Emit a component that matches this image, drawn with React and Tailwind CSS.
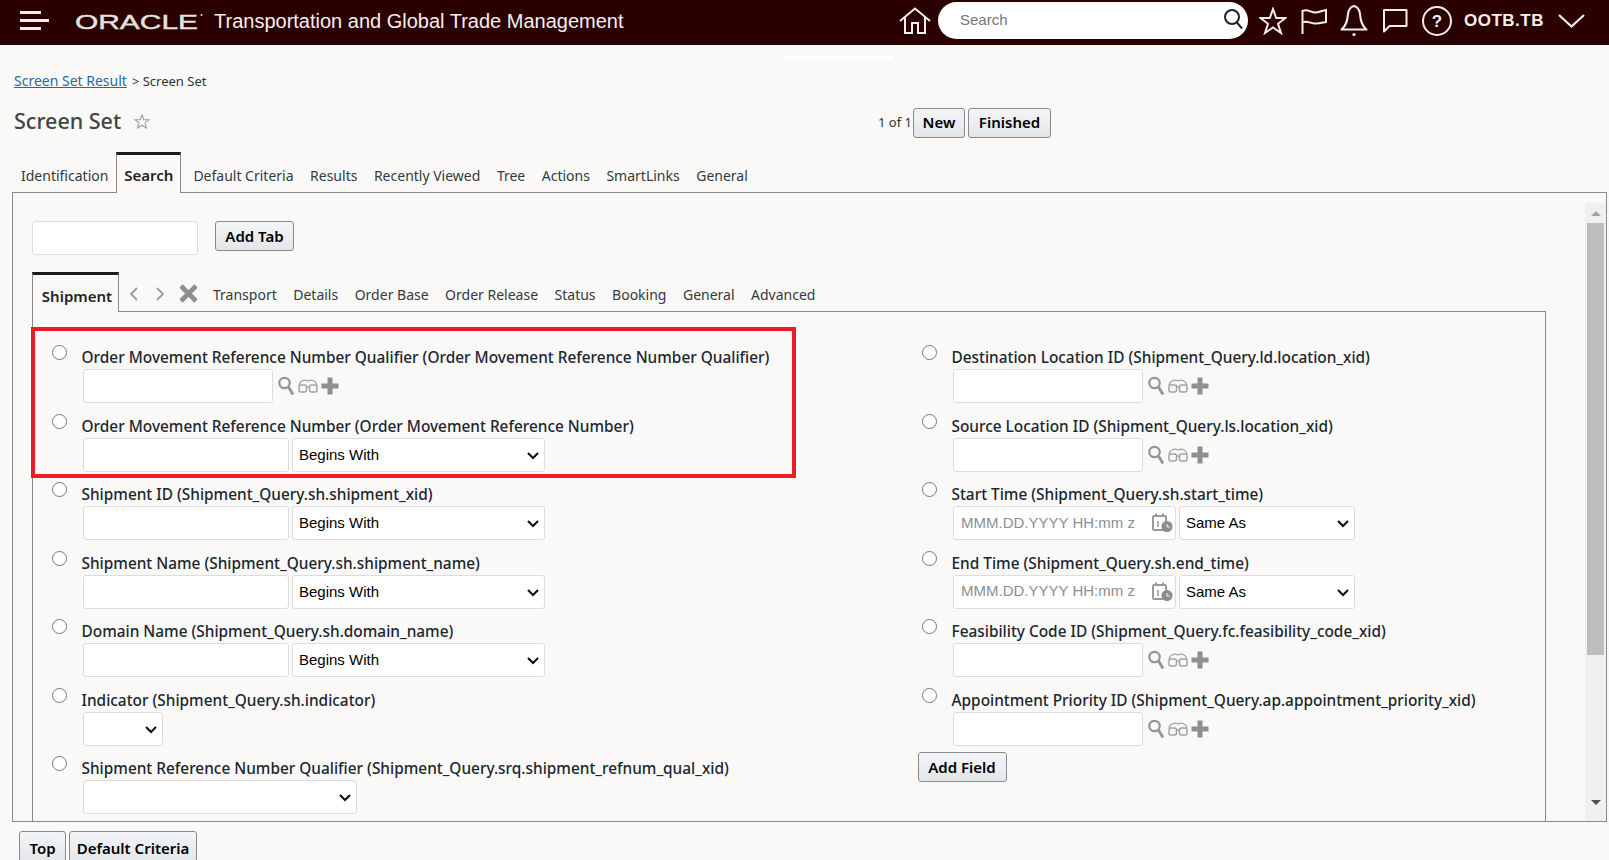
import React from "react";

const sans = "font-['Noto_Sans',sans-serif]";
const arial = "font-['Liberation_Sans',Arial,sans-serif]";

const MagnifierIcon = () => (
  <svg width="17" height="20" viewBox="0 0 17 20" fill="none" className="shrink-0">
    <circle cx="6.5" cy="7" r="5.2" stroke="#949494" strokeWidth="2.2" />
    <path d="M10.5 11 L15 18.5" stroke="#949494" strokeWidth="2.8" />
  </svg>
);

const GlassesIcon = () => (
  <svg width="20" height="16" viewBox="0 0 20 16" fill="none" className="shrink-0">
    <path d="M1 7 C2 3 6 1 10 3 C14 1 18 3 19 7" stroke="#a3a3a3" strokeWidth="1.3" />
    <rect x="1" y="7" width="7.5" height="7" rx="2" stroke="#a3a3a3" strokeWidth="1.5" />
    <rect x="11.5" y="7" width="7.5" height="7" rx="2" stroke="#a3a3a3" strokeWidth="1.5" />
    <path d="M8.5 9 H11.5" stroke="#a3a3a3" strokeWidth="1.3" />
  </svg>
);

const PlusIcon = () => (
  <svg width="18" height="18" viewBox="0 0 18 18" className="shrink-0">
    <path d="M6.5 0.5 H11.5 V6.5 H17.5 V11.5 H11.5 V17.5 H6.5 V11.5 H0.5 V6.5 H6.5 Z" fill="#8f8f8f" />
  </svg>
);

const CalendarClockIcon = () => (
  <svg width="21" height="20" viewBox="0 0 21 20" className="shrink-0">
    <rect x="1" y="3" width="13" height="14" rx="1" fill="none" stroke="#9a9a9a" strokeWidth="2" />
    <path d="M4 0.5 V4 M11 0.5 V4" stroke="#9a9a9a" strokeWidth="2" />
    <path d="M6 8 V14" stroke="#9a9a9a" strokeWidth="1.6" />
    <circle cx="15" cy="13.5" r="5.5" fill="#8c8c8c" />
    <path d="M15 11 V14 H18" fill="none" stroke="#f2f2f2" strokeWidth="1" />
  </svg>
);

const HeaderIcons = () => (
  <div className="flex items-center">
    {/* star */}
    <svg width="28" height="28" viewBox="0 0 28 28" fill="none" className="ml-[11px]" stroke="#f5efec" strokeWidth="2">
      <path d="M14 2 L17.2 11 L26.5 11 L19 16.8 L22 26 L14 20.4 L6 26 L9 16.8 L1.5 11 L10.8 11 Z" strokeLinejoin="miter" />
    </svg>
    {/* flag */}
    <svg width="28" height="28" viewBox="0 0 28 28" fill="none" className="ml-[13px]" stroke="#f5efec" strokeWidth="2">
      <path d="M2.5 27 V4 C8 1.5 11 6 16 5.5 C20 5 23 3.5 26 3 V15 C21 16 18 17 14 16.5 C10 16 7 13.5 2.5 15.5" />
    </svg>
    {/* bell */}
    <svg width="28" height="32" viewBox="0 0 28 32" fill="none" className="ml-[12px]" stroke="#f5efec" strokeWidth="2">
      <path d="M14 1 C10 2 8.5 5 8 9 C7.5 14 7 20 1.5 24.5 H26.5 C21 20 20.5 14 20 9 C19.5 5 18 2 14 1 Z" strokeLinejoin="round" />
      <circle cx="14" cy="29.5" r="1.6" fill="#f5efec" stroke="none" />
    </svg>
    {/* chat */}
    <svg width="26" height="25" viewBox="0 0 26 25" fill="none" className="ml-[14px]" stroke="#f5efec" strokeWidth="2">
      <path d="M2 2 H24.5 V18 H7.5 L2 23.5 Z" strokeLinejoin="round" />
    </svg>
    {/* help */}
    <svg width="30" height="30" viewBox="0 0 30 30" fill="none" className="ml-[14px]">
      <circle cx="15" cy="15" r="14" stroke="#f5efec" strokeWidth="2" />
      <text x="15" y="21" textAnchor="middle" fontSize="17" fontWeight="700" fill="#f5efec" fontFamily="Liberation Sans">?</text>
    </svg>
  </div>
);

const Row = ({ label, children }) => (
  <div className="flex h-[68.5px] items-start">
    <input type="radio" name="field" className="mt-[1px] h-[15px] w-[15px] shrink-0" />
    <div className="ml-[15px] min-w-0">
      <div className={`mt-[4px] text-[15.4px] leading-[20px] font-medium whitespace-nowrap text-[#20262e] ${sans}`}>{label}</div>
      <div className="mt-[1px] ml-[1.5px] flex items-center">{children}</div>
    </div>
  </div>
);

const TextInput = ({ w, ...rest }) => (
  <input type="text" className={`${w} h-[34px] rounded-[3px] border border-[#dcdcdc] bg-white px-[6px] ${arial} text-[15px]`} {...rest} />
);

const Select = ({ w, value }) => (
  <div className={`relative ${w}`}>
    <select defaultValue={value} className={`h-[34px] w-full appearance-none rounded-[3px] border border-[#dcdcdc] bg-white pl-[6px] pt-[1px] ${arial} text-[15px] text-black`}>
      <option>{value}</option>
    </select>
    <svg width="12" height="8" viewBox="0 0 12 8" fill="none" stroke="#111" strokeWidth="2.2" className="absolute right-[6px] top-[14px]">
      <path d="M1 1 L6 6 L11 1" />
    </svg>
  </div>
);

const Lookup = () => (
  <div className="flex items-center">
    <TextInput w="w-[190px]" />
    <div className="ml-[5px] flex items-center">
      <MagnifierIcon />
      <span className="ml-[3px]"><GlassesIcon /></span>
      <span className="ml-[3px]"><PlusIcon /></span>
    </div>
  </div>
);

const Operator = () => (
  <>
    <TextInput w="w-[206px]" />
    <span className="ml-[3px]"><Select w="w-[253px]" value="Begins With" /></span>
  </>
);

const DateField = () => (
  <>
    <div className="flex h-[34px] w-[223px] items-center justify-between rounded-[3px] border border-[#dcdcdc] bg-white pl-[7px] pr-[2px]">
      <span className={`${arial} text-[15px] text-[#8a9097]`}>MMM.DD.YYYY HH:mm z</span>
      <CalendarClockIcon />
    </div>
    <span className="ml-[3px]"><Select w="w-[176px]" value="Same As" /></span>
  </>
);

const Btn = ({ children, className = "" }) => (
  <button className={`rounded-[3px] border border-[#8a8a8a] bg-gradient-to-b from-[#f3f5f7] to-[#e3e6e9] text-[15px] font-semibold text-black ${sans} ${className}`}>
    {children}
  </button>
);

const Tab = ({ children }) => (
  <span className={`block text-[14px] leading-[20px] whitespace-nowrap text-[#333a40] ${sans}`}>{children}</span>
);

export default function App() {
  return (
    <div className={`relative flex h-[860px] w-[1609px] flex-col overflow-hidden bg-[#faf9f7] ${sans}`}>
      {/* top bar */}
      <header className="flex h-[45px] shrink-0 items-center bg-[#2b0000] pb-[4px] text-[#f5efec]">
        <div className="ml-[20px] flex w-[29px] flex-col gap-[5.5px]">
          <div className="h-[2.5px] w-[21px] bg-[#f5efec]" />
          <div className="h-[2.5px] w-[29px] bg-[#f5efec]" />
          <div className="h-[2.5px] w-[21px] bg-[#f5efec]" />
        </div>
        <svg width="130" height="20" viewBox="0 0 130 20" className="ml-[26px] shrink-0">
          <text x="0" y="17.5" textLength="123" lengthAdjust="spacingAndGlyphs" fontSize="21" stroke="#e7e2df" strokeWidth="0.4" fill="#e7e2df" fontFamily="Liberation Sans">ORACLE</text>
          <circle cx="126.5" cy="4" r="1" fill="#e7e2df" />
        </svg>
        <span className={`ml-[9px] text-[20px] whitespace-nowrap ${arial}`}>Transportation and Global Trade Management</span>
        <div className="ml-auto flex items-center">
          <svg width="32" height="28" viewBox="0 0 32 28" fill="none" stroke="#f5efec" strokeWidth="2">
            <path d="M1 14 L16 1.5 L31 14 M6 10.5 V26 H13 V16 H19 V26 H26 V10.5" />
          </svg>
          <div className="relative ml-[7px] flex h-[37px] w-[310px] items-center rounded-full bg-white pl-[22px]">
            <span className={`text-[15px] text-[#777] ${arial}`}>Search</span>
            <svg width="21" height="22" viewBox="0 0 21 22" fill="none" stroke="#222" strokeWidth="2" className="absolute right-[4px] top-[6px]">
              <circle cx="9" cy="9" r="7" />
              <path d="M13.5 14 L19 20.5" />
            </svg>
          </div>
          <HeaderIcons />
          <span className={`ml-[12px] text-[17px] font-bold tracking-[0.5px] ${arial}`}>OOTB.TB</span>
          <svg width="27" height="14" viewBox="0 0 27 14" fill="none" stroke="#f5efec" strokeWidth="2.2" className="ml-[14px] mr-[24px]">
            <path d="M1 1 L13.5 12.5 L26 1" />
          </svg>
        </div>
      </header>

      {/* stray strip under the bar */}
      <div className="absolute left-[783px] top-[56px] h-[5px] w-[110px] bg-white" />

      <div className="mt-[26px] ml-[14px] flex items-baseline text-[14px] leading-[20px]">
        <a className="text-[#1b6ca8] underline">Screen Set Result</a>
        <span className="ml-[5px] text-[13px] text-[#333]">&gt; Screen Set</span>
      </div>

      <div className="relative mt-[14px] flex h-[32px] items-center">
        <h1 className="ml-[14px] mt-[1px] text-[21.5px] font-medium text-[#444]">Screen Set</h1>
        <svg width="16" height="15" viewBox="0 0 17 16" fill="none" stroke="#a0a0a0" strokeWidth="1.2" className="ml-[13px]">
          <path d="M8.5 1 L10.5 6 L16 6.2 L11.7 9.5 L13.2 15 L8.5 12 L3.8 15 L5.3 9.5 L1 6.2 L6.5 6 Z" />
        </svg>
        <div className="absolute left-[878px] top-[2px] flex h-[31px] items-center">
          <span className={`w-[35px] text-[13px] whitespace-nowrap text-[#333] ${sans}`}>1 of 1</span>
          <Btn className="h-[30px] w-[52px]">New</Btn>
          <Btn className="ml-[3px] h-[30px] w-[83px]">Finished</Btn>
        </div>
      </div>

      {/* primary tabs */}
      <div className="mt-[15px] flex h-[41px] items-end pl-[21px]">
        <div className="pb-[6px]"><Tab>Identification</Tab></div>
        <div className="relative z-10 mb-[-1px] ml-[8px] flex h-[41px] w-[65px] items-center justify-center border-x border-t-[3px] border-x-[#8a8a8a] border-t-[#1c1c1c] bg-[#faf9f7] pt-[3px] text-[15px] font-semibold text-[#222]">Search</div>
        <div className="flex gap-[16.5px] pl-[12px] pb-[6px]">
          <Tab>Default Criteria</Tab>
          <Tab>Results</Tab>
          <Tab>Recently Viewed</Tab>
          <Tab>Tree</Tab>
          <Tab>Actions</Tab>
          <Tab>SmartLinks</Tab>
          <Tab>General</Tab>
        </div>
      </div>

      {/* outer panel */}
      <div className="ml-[12px] flex h-[630px] w-[1595px] shrink-0 overflow-hidden border border-[#8a8a8a]">
        <div className="min-w-0 flex-1 pl-[19px]">
          <div className="mt-[28px] flex items-start">
            <input type="text" className="h-[34px] w-[166px] rounded-[3px] border border-[#dcdcdc] bg-white" />
            <Btn className="ml-[17px] h-[30px] w-[79px]">Add Tab</Btn>
          </div>

          {/* field tabs */}
          <div className="mt-[17px] flex h-[39px] items-end">
            <div className="relative z-10 mb-[-1px] flex h-[40px] w-[87px] items-center justify-center border-x border-t-[3px] border-x-[#8a8a8a] border-t-[#1c1c1c] bg-[#faf9f7] pt-[6px] pl-[3px] text-[15px] font-semibold text-[#222]">Shipment</div>
            <div className="flex items-center pl-[10px] pb-[8px]">
              <svg width="10" height="14" viewBox="0 0 10 14" fill="none" stroke="#9c9c9c" strokeWidth="1.8"><path d="M8 1 L2 7 L8 13" /></svg>
              <svg width="10" height="14" viewBox="0 0 10 14" fill="none" stroke="#9c9c9c" strokeWidth="1.8" className="ml-[16px]"><path d="M2 1 L8 7 L2 13" /></svg>
              <svg width="19" height="19" viewBox="0 0 19 19" fill="none" stroke="#8e8e8e" strokeWidth="4.6" className="ml-[14px]"><path d="M2 2 L17 17 M17 2 L2 17" /></svg>
            </div>
            <div className="flex gap-[16.5px] pl-[15px] pb-[6px]">
              <Tab>Transport</Tab>
              <Tab>Details</Tab>
              <Tab>Order Base</Tab>
              <Tab>Order Release</Tab>
              <Tab>Status</Tab>
              <Tab>Booking</Tab>
              <Tab>General</Tab>
              <Tab>Advanced</Tab>
            </div>
          </div>

          {/* fields */}
          <div className="grid h-[600px] w-[1514px] grid-cols-[870px_1fr] border-x border-t border-[#8a8a8a] pt-[32px]">
            <div className="pl-[18.5px]">
              <Row label="Order Movement Reference Number Qualifier (Order Movement Reference Number Qualifier)"><Lookup /></Row>
              <Row label="Order Movement Reference Number (Order Movement Reference Number)"><Operator /></Row>
              <Row label="Shipment ID (Shipment_Query.sh.shipment_xid)"><Operator /></Row>
              <Row label="Shipment Name (Shipment_Query.sh.shipment_name)"><Operator /></Row>
              <Row label="Domain Name (Shipment_Query.sh.domain_name)"><Operator /></Row>
              <Row label="Indicator (Shipment_Query.sh.indicator)"><Select w="w-[80px]" value="" /></Row>
              <Row label="Shipment Reference Number Qualifier (Shipment_Query.srq.shipment_refnum_qual_xid)"><Select w="w-[274px]" value="" /></Row>
            </div>
            <div className="pl-[18.5px]">
              <Row label="Destination Location ID (Shipment_Query.ld.location_xid)"><Lookup /></Row>
              <Row label="Source Location ID (Shipment_Query.ls.location_xid)"><Lookup /></Row>
              <Row label="Start Time (Shipment_Query.sh.start_time)"><DateField /></Row>
              <Row label="End Time (Shipment_Query.sh.end_time)"><DateField /></Row>
              <Row label="Feasibility Code ID (Shipment_Query.fc.feasibility_code_xid)"><Lookup /></Row>
              <Row label="Appointment Priority ID (Shipment_Query.ap.appointment_priority_xid)"><Lookup /></Row>
              <Btn className="mt-[-12px] ml-[-4px] h-[30px] w-[89px]">Add Field</Btn>
            </div>
          </div>
        </div>

        {/* scrollbar */}
        <div className="mt-[10px] flex w-[21px] shrink-0 flex-col items-center bg-[#f0f0f0]">
          <div className="flex h-[20px] items-center justify-center">
            <div className="h-0 w-0 border-x-[5px] border-b-[5px] border-x-transparent border-b-[#a3a3a3]" />
          </div>
          <div className="h-[432px] w-[17px] bg-[#bdbdbd]" />
          <div className="mt-auto flex h-[24px] items-start justify-center pt-[3px]">
            <div className="h-0 w-0 border-x-[5px] border-t-[5px] border-x-transparent border-t-[#505050]" />
          </div>
        </div>
      </div>

      {/* bottom buttons */}
      <div className="ml-[19px] mt-[9px] flex gap-[3px]">
        <Btn className="h-[34px] w-[47px]">Top</Btn>
        <Btn className="h-[34px] w-[128px] text-[14.5px]">Default Criteria</Btn>
      </div>

      {/* red annotation box */}
      <div className="absolute left-[31px] top-[327px] h-[151px] w-[765px] border-[4px] border-[#ed1c24]" />
    </div>
  );
}
